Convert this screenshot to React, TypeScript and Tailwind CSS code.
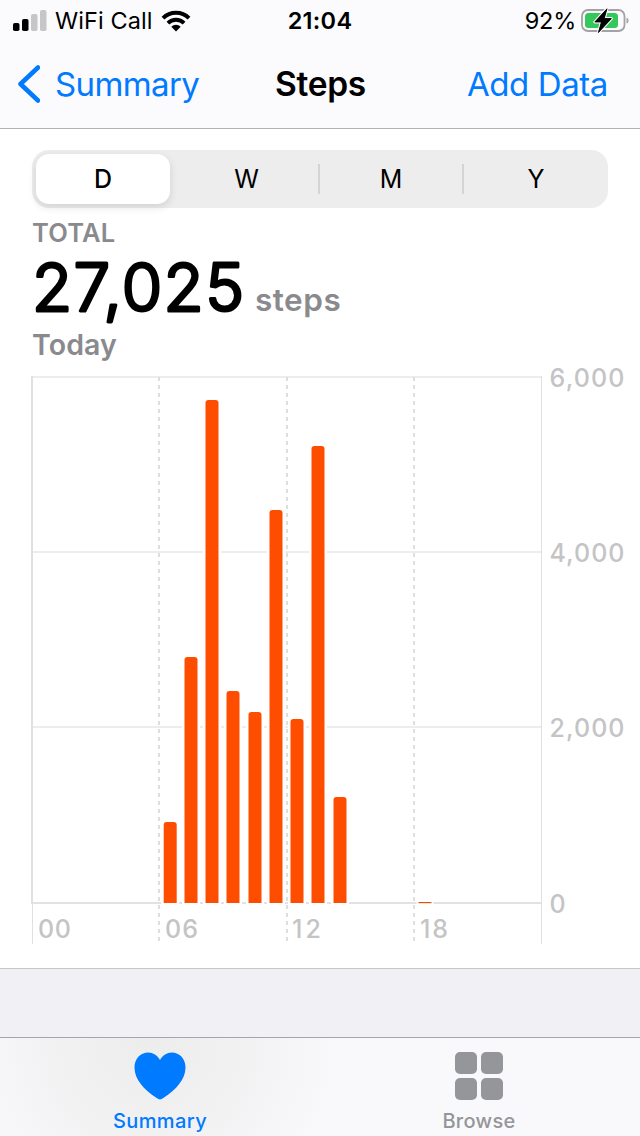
import React from 'react';

const bars = [
  { x: 163.7, top: 822 },
  { x: 184.5, top: 657 },
  { x: 205.5, top: 400 },
  { x: 226.5, top: 691 },
  { x: 248.5, top: 712 },
  { x: 269.5, top: 510 },
  { x: 290.5, top: 719 },
  { x: 311.5, top: 446 },
  { x: 333.5, top: 797 },
];

const yTicks = [
  { label: '6,000', y: 377, width: 75 },
  { label: '4,000', y: 552, width: 75 },
  { label: '2,000', y: 727, width: 75 },
  { label: '0', y: 903, width: 15 },
];

const xTicks = [
  { label: '00', x: 38, width: 33 },
  { label: '06', x: 165, width: 33 },
  { label: '12', x: 292, width: 29 },
  { label: '18', x: 420, width: 28 },
];

const StatusBar = () => (
  <div className="flex h-10 items-center pt-[1px] text-[23.5px] leading-10">
    <div className="flex flex-1 items-center pl-[13px]">
      <svg className="h-[22px] w-[34px]" viewBox="0 0 34 22">
        <rect x="0" y="13" width="6.5" height="8" rx="1.8" />
        <rect x="9" y="9" width="6.5" height="12" rx="1.8" />
        <rect x="18" y="4" width="6.5" height="17" rx="1.8" fill="#c6c6c8" />
        <rect x="27" y="0" width="6.5" height="21" rx="1.8" fill="#c6c6c8" />
      </svg>
      <span className="ml-[8px] w-[98px] whitespace-nowrap tracking-[0.1px]">WiFi Call</span>
      <svg className="ml-[8px] h-[22px] w-[30px]" viewBox="0 0 30 22">
        <path d="M2 8.2A18.5 18.5 0 0 1 28 8.2" fill="none" stroke="#000" strokeWidth="4" />
        <path d="M6.9 13.1A11.5 11.5 0 0 1 23.1 13.1" fill="none" stroke="#000" strokeWidth="3.8" />
        <path d="M15 21.5L10.3 16.8A6.7 6.7 0 0 1 19.7 16.8Z" />
      </svg>
    </div>
    <span className="-ml-[2px] font-semibold tracking-[0.3px]">21:04</span>
    <div className="flex flex-1 items-center justify-end pr-[11px]">
      <span className="mr-[5px] tracking-[-0.2px]">92%</span>
      <svg className="h-[26px] w-[48px]" viewBox="0 0 48 26">
        <rect x="1" y="2" width="42.5" height="21" rx="6" fill="none" stroke="#a3a3a5" strokeWidth="1.8" />
        <path d="M45.5 9.5Q47.6 10 47.6 12.5T45.5 15.5Z" fill="#a3a3a5" />
        <rect x="4" y="5" width="33" height="15" rx="3.5" fill="#34c759" />
        <path
          d="M26 .8L13.8 14H20.4L17.4 24.6L30.4 10.6H23.2Z"
          fill="#000"
          stroke="#fbfbfd"
          strokeWidth="3"
          strokeLinejoin="round"
          paintOrder="stroke"
        />
        <path
          d="M26 .8L13.8 14H20.4L17.4 24.6L30.4 10.6H23.2Z"
          stroke="#000"
          strokeWidth=".8"
          strokeLinejoin="round"
        />
      </svg>
    </div>
  </div>
);

const NavBar = () => (
  <div className="flex h-[88px] items-center text-[33px] leading-[88px] text-[#007aff]">
    <div className="flex w-[275px] items-center pl-[18px]">
      <svg className="h-[38px] w-[22px]" viewBox="0 0 22 38">
        <path d="M20 2.5L2.5 19L20 35.5" fill="none" stroke="currentColor" strokeWidth="4.5" strokeLinecap="round" strokeLinejoin="round" />
      </svg>
      <span className="ml-[15px] tracking-[-0.6px]">Summary</span>
    </div>
    <h1 className="text-[33.5px] font-semibold tracking-[-0.3px] text-black">Steps</h1>
    <div className="flex flex-1 justify-end pr-[32px]">
      <span className="tracking-[-0.4px]">Add Data</span>
    </div>
  </div>
);

const SegmentedControl = () => (
  <div className="mx-8 mt-[21px] flex h-[58px] items-center rounded-[17px] bg-[#ededed] text-[25px]">
    <div className="ml-1 flex h-[50px] w-[134px] items-center justify-center rounded-[13px] bg-white pt-[2px] font-medium shadow-[0_3px_8px_rgba(0,0,0,0.12)]">
      D
    </div>
    <div className="flex w-[148px] items-center justify-center pt-[2px] pl-[5px]">W</div>
    <div className="h-[30px] w-[2px] bg-[#d4d4d6]" />
    <div className="flex w-[142px] items-center justify-center pt-[2px]">M</div>
    <div className="h-[30px] w-[2px] bg-[#d4d4d6]" />
    <div className="flex flex-1 items-center justify-center pt-[2px]">Y</div>
  </div>
);

const StepsChart = () => (
  <svg className="block h-[600px] w-full overflow-visible" viewBox="0 368 640 600">
    {yTicks.map((t) => (
      <g key={t.label}>
        <line x1="32" x2="541" y1={t.y} y2={t.y} stroke={t.label === '0' ? '#e2e2e4' : '#ededee'} strokeWidth="2" />
        <text x="549.5" y={t.y + 10} textLength={t.width} fill="#c4c4c6" fontSize="25" fontWeight="450">
          {t.label}
        </text>
      </g>
    ))}

    <line x1="32" x2="32" y1="376" y2="904" stroke="#e0e0e2" strokeWidth="2" />
    <line x1="32.5" x2="32.5" y1="904" y2="944" stroke="#e0e0e2" />
    <line x1="541.5" x2="541.5" y1="376" y2="944" stroke="#e0e0e2" />
    {[159, 287, 414].map((x) => (
      <line key={x} x1={x} x2={x} y1="377" y2="942" stroke="#dedee0" strokeWidth="2" strokeDasharray="4 4" />
    ))}

    {xTicks.map((t) => (
      <text key={t.label} x={t.x} y="938" textLength={t.width} fill="#c4c4c6" fontSize="25" fontWeight="450">
        {t.label}
      </text>
    ))}

    {bars.map((b) => (
      <g key={b.x}>
        {/* white gutter keeps the grid lines off the bar */}
        <rect x={b.x - 2.5} y={b.top} width="18" height={904 - b.top} fill="#fff" />
        <path
          d={`M${b.x} 903V${b.top + 3}q0 -3 3 -3h7q3 0 3 3V903Z`}
          fill="#ff4d00"
        />
      </g>
    ))}
    <rect x="416.5" y="901" width="17" height="3" fill="#fff" />
    <rect x="418.5" y="902" width="13" height="1.2" fill="#e0500f" />
  </svg>
);

const TabBar = () => (
  <div className="flex h-[99px] border-t border-[#a5a5ad] bg-[#f9f9fc] bg-[radial-gradient(ellipse_190px_200px_at_150px_0px,#ededee_0%,#f1f1f2_45%,#f9f9fc_100%)] text-[20px] leading-6">
    <div className="flex w-1/2 flex-col items-center pt-[14px] text-[#007aff]">
      <svg className="h-[48px] w-[52px]" viewBox="0 0 52 48" fill="currentColor">
        <path d="M26 8C23.3 3.3 19 .5 14.3 .5C6.2 .5 .5 6.9 .5 15.4C.5 27 9.5 37.2 22.7 46.1C23.8 46.8 25.1 47.5 26 47.5S28.2 46.8 29.3 46.1C42.5 37.2 51.5 27 51.5 15.4C51.5 6.9 45.8 .5 37.7 .5C33 .5 28.7 3.3 26 8Z" />
      </svg>
      <span className="mt-[9px] font-[450] tracking-[0.4px]">Summary</span>
    </div>
    <div className="flex w-1/2 flex-col items-center pt-[14px] pr-[2px] text-[#949699]">
      <div className="grid grid-cols-2 gap-1">
        <div className="size-[22px] rounded-[5px] bg-[#949699]" />
        <div className="size-[22px] rounded-[5px] bg-[#949699]" />
        <div className="size-[22px] rounded-[5px] bg-[#949699]" />
        <div className="size-[22px] rounded-[5px] bg-[#949699]" />
      </div>
      <span className="mt-[9px] font-[450] tracking-[0.3px]">Browse</span>
    </div>
  </div>
);

const App: React.FC = () => {
  return (
    <div className="flex h-[1136px] w-[640px] flex-col overflow-hidden bg-white font-['Inter','Liberation_Sans',sans-serif] text-black">
      <header className="h-[129px] border-b border-[#b2b2b4] bg-[#fbfbfd]">
        <StatusBar />
        <NavBar />
      </header>

      <main className="h-[840px] border-b border-[#c6c6c8]">
        <SegmentedControl />
        <div className="flex h-[160px] flex-col pl-[32px] font-semibold text-[#8a8a8e]">
          <p className="mt-[10px] h-[30px] text-[25.5px] leading-[30px] tracking-[0.2px]">TOTAL</p>
          <div className="flex h-[80px] items-baseline">
            <svg className="h-[80px] w-[215px]" viewBox="0 0 215 80">
              <text x="0" y="63.3" textLength="212" fontSize="65.5" fontWeight="300" stroke="#000" strokeWidth="3" strokeLinejoin="round">
                27,025
              </text>
            </svg>
            <span className="ml-[8px] -translate-y-[17px] text-[31.5px] leading-none tracking-[0.5px]">steps</span>
          </div>
          <p className="mt-[2px] h-[30px] text-[28.5px] leading-[30px] tracking-[0.1px]">Today</p>
        </div>
        <StepsChart />
      </main>

      <div className="h-[68px] bg-[#f0f0f5]" />
      <TabBar />
    </div>
  );
};

export default App;
